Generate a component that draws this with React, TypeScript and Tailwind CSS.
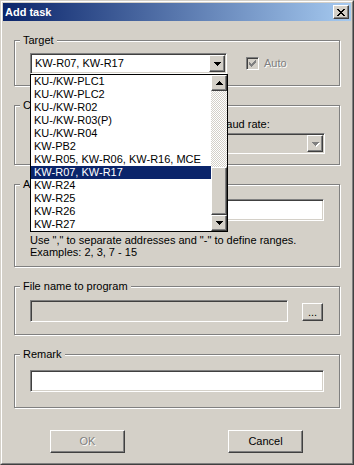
import React from "react";

const RAISED =
  "border border-t-white border-l-white border-r-[#404040] border-b-[#404040] shadow-[inset_-1px_-1px_0_#808080] bg-[#d4d0c8]";
const SUNKEN =
  "border border-t-[#808080] border-l-[#808080] border-b-white border-r-white shadow-[inset_1px_1px_0_#404040,inset_-1px_-1px_0_#d4d0c8]";

function Pix({ rows, color }: { rows: string[]; color: string }) {
  const w = rows[0].length;
  const h = rows.length;
  const rects: React.ReactNode[] = [];
  rows.forEach((r, y) => {
    for (let x = 0; x < r.length; x++) {
      if (r[x] === "x") rects.push(<rect key={`${x}-${y}`} x={x} y={y} width={1} height={1} fill={color} />);
    }
  });
  return (
    <svg width={w} height={h} viewBox={`0 0 ${w} ${h}`} shapeRendering="crispEdges" className="block">
      {rects}
    </svg>
  );
}

const DOWN = ["xxxxxxx", ".xxxxx.", "..xxx..", "...x..."];
const UP = ["...x...", "..xxx..", ".xxxxx.", "xxxxxxx"];
const CLOSE = ["xx....xx", ".xx..xx.", "..xxxx..", "...xx...", "..xxxx..", ".xx..xx.", "xx....xx"];
const CHECK = ["......x", ".....xx", "x...xxx", "xx.xxx.", "xxxxx..", ".xxx...", "..x...."];

function DisabledPix({ rows }: { rows: string[] }) {
  return (
    <div className="relative">
      <div className="absolute left-px top-px">
        <Pix rows={rows} color="#ffffff" />
      </div>
      <div className="relative">
        <Pix rows={rows} color="#808080" />
      </div>
    </div>
  );
}

function Group({
  legend,
  className,
  children,
}: {
  legend: string;
  className: string;
  children?: React.ReactNode;
}) {
  return (
    <div
      className={`relative w-[326px] border border-[#808080] shadow-[1px_1px_0_#fff,inset_1px_1px_0_#fff] ${className}`}
    >
      <div className="absolute left-[5px] top-[-7px] px-[3px] bg-[#d4d0c8] leading-[13px] whitespace-nowrap">
        {legend}
      </div>
      {children}
    </div>
  );
}

function Combo({
  text,
  width,
  disabled,
  children,
}: {
  text: string;
  width: string;
  disabled?: boolean;
  children?: React.ReactNode;
}) {
  return (
    <div className={`relative ${width} h-[21px]`}>
      <div className={`${SUNKEN} h-full p-px flex ${disabled ? "bg-[#d4d0c8]" : "bg-white"}`}>
        <div className="flex-1 pl-[3px] leading-[17px] whitespace-nowrap overflow-hidden">{text}</div>
        <div className={`${RAISED} w-[16px] h-[17px] flex items-center justify-center`}>
          {disabled ? <DisabledPix rows={DOWN} /> : <Pix rows={DOWN} color="#000" />}
        </div>
      </div>
      {children}
    </div>
  );
}

const ITEMS = [
  "KU-/KW-PLC1",
  "KU-/KW-PLC2",
  "KU-/KW-R02",
  "KU-/KW-R03(P)",
  "KU-/KW-R04",
  "KW-PB2",
  "KW-R05, KW-R06, KW-R16, MCE",
  "KW-R07, KW-R17",
  "KW-R24",
  "KW-R25",
  "KW-R26",
  "KW-R27",
];

function DropList() {
  return (
    <div className="absolute left-0 top-[21px] z-10 w-[198px] h-[158px] border border-black bg-white flex">
      <div className="flex-1 flex flex-col">
        {ITEMS.map((it, i) => (
          <div
            key={it}
            className={`h-[13px] leading-[13px] pl-[3px] whitespace-nowrap ${
              i === 7 ? "bg-[#0a246a] text-white" : ""
            }`}
          >
            {it}
          </div>
        ))}
      </div>
      <div className="w-[16px] flex flex-col">
        <div className={`${RAISED} h-[16px] flex items-center justify-center`}>
          <Pix rows={UP} color="#000" />
        </div>
        <div className="h-[76px] bg-[image:repeating-conic-gradient(#fff_0_25%,#d4d0c8_0_50%)] bg-[length:2px_2px]" />
        <div className={`${RAISED} h-[48px]`} />
        <div className={`${RAISED} h-[16px] flex items-center justify-center`}>
          <Pix rows={DOWN} color="#000" />
        </div>
      </div>
    </div>
  );
}

export default function App() {
  return (
    <div className="w-[354px] h-[465px] bg-[#d4d0c8] font-['Liberation_Sans',Arial,sans-serif] text-[11px] text-black select-none">
      <div className="h-full border border-t-[#d4d0c8] border-l-[#d4d0c8] border-r-[#404040] border-b-[#404040]">
        <div className="h-full border border-t-white border-l-white border-r-[#808080] border-b-[#808080] p-px flex flex-col">
          {/* Title bar */}
          <div className="h-[18px] shrink-0 flex items-center justify-between pl-[2px] pr-[2px] bg-[linear-gradient(to_right,#0a246a,#a6caf0)]">
            <span className="text-white font-bold leading-[13px]">Add task</span>
            <div className={`${RAISED} w-[16px] h-[14px] flex items-center justify-center pt-px`}>
              <Pix rows={CLOSE} color="#000" />
            </div>
          </div>

          {/* Content */}
          <div className="pl-[11px] pr-[10px] pt-[19px] flex flex-col">
            <Group legend="Target" className="h-[46px] pt-[12px] pl-[15px] mb-[19px] z-20">
              <div className="flex items-center">
                <Combo text="KW-R07, KW-R17" width="w-[197px]">
                  <DropList />
                </Combo>
                <div className="ml-[19px] w-[13px] h-[13px] border border-t-[#808080] border-l-[#808080] border-b-white border-r-white shadow-[inset_1px_1px_0_#404040,inset_-1px_-1px_0_#d4d0c8] bg-[#d4d0c8] flex items-center justify-center">
                  <Pix rows={CHECK} color="#808080" />
                </div>
                <span className="ml-[5px] leading-[13px] text-[#808080] [text-shadow:1px_1px_0_#fff]">Auto</span>
              </div>
            </Group>

            <Group legend="C" className="h-[60px] pt-[12px] pl-[15px] mb-[19px]">
              <div className="flex">
                <div className="w-[189px]" />
                <div className="flex flex-col">
                  <div className="h-[13px] leading-[13px] mb-[2px]">Baud rate:</div>
                  <Combo text="" width="w-[106px]" disabled />
                </div>
              </div>
            </Group>

            <Group legend="A" className="h-[83px] pt-[14px] pl-[15px] mb-[19px]">
              <div className={`${SUNKEN} w-[294px] h-[22px] bg-white`} />
              <div className="mt-[13px] leading-[12px] whitespace-nowrap">
                <div>Use "," to separate addresses and "-" to define ranges.</div>
                <div>Examples: 2, 3, 7 - 15</div>
              </div>
            </Group>

            <Group legend="File name to program" className="h-[49px] pt-[13px] pl-[15px] mb-[19px]">
              <div className="flex items-start">
                <div className={`${SUNKEN} w-[258px] h-[22px] bg-[#d4d0c8]`} />
                <div
                  className={`${RAISED} ml-[14px] mt-[3px] w-[21px] h-[18px] flex items-center justify-center leading-[13px]`}
                >
                  ...
                </div>
              </div>
            </Group>

            <Group legend="Remark" className="h-[54px] pt-[15px] pl-[15px] mb-[22px]">
              <div className={`${SUNKEN} w-[294px] h-[22px] bg-white`} />
            </Group>

            <div className="flex pl-[36px]">
              <div
                className={`${RAISED} w-[75px] h-[23px] flex items-center justify-center text-[#808080] [text-shadow:1px_1px_0_#fff]`}
              >
                OK
              </div>
              <div className={`${RAISED} ml-[103px] w-[75px] h-[23px] flex items-center justify-center`}>
                Cancel
              </div>
            </div>
          </div>
        </div>
      </div>
    </div>
  );
}
